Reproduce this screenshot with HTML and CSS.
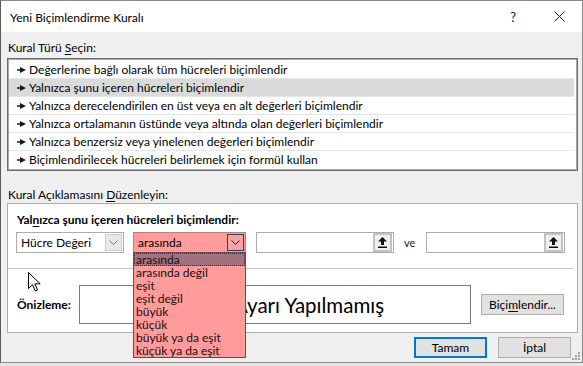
FILE: index.html
```html
<!DOCTYPE html>
<html lang="tr">
<head>
  <meta charset="UTF-8">
  <meta name="viewport" content="width=device-width, initial-scale=1.0">
  <title>Yeni Biçimlendirme Kuralı</title>
  <link rel="stylesheet" href="styles.css">
</head>
<body>
  <div class="dialog">
    <div class="titlebar">
      <span class="title">Yeni Biçimlendirme Kuralı</span>
      <span class="help">?</span>
      <svg class="close" width="11" height="11" viewBox="0 0 11 11"><path d="M0.5 0.5L10.5 10.5M10.5 0.5L0.5 10.5" stroke="#222" stroke-width="1"/></svg>
    </div>

    <div class="content">
      <div class="group-label">Kural Türü <u>S</u>eçin:</div>
      <ul class="rule-list">
        <li><svg class="bullet" width="9" height="6" viewBox="0 0 9 6"><path d="M0 2.2h4v1.6H0z M3 0L9 3L3 6z" fill="#1a1a1a"/></svg>Değerlerine bağlı olarak tüm hücreleri biçimlendir</li>
        <li class="selected"><svg class="bullet" width="9" height="6" viewBox="0 0 9 6"><path d="M0 2.2h4v1.6H0z M3 0L9 3L3 6z" fill="#1a1a1a"/></svg>Yalnızca şunu içeren hücreleri biçimlendir</li>
        <li><svg class="bullet" width="9" height="6" viewBox="0 0 9 6"><path d="M0 2.2h4v1.6H0z M3 0L9 3L3 6z" fill="#1a1a1a"/></svg>Yalnızca derecelendirilen en üst veya en alt değerleri biçimlendir</li>
        <li><svg class="bullet" width="9" height="6" viewBox="0 0 9 6"><path d="M0 2.2h4v1.6H0z M3 0L9 3L3 6z" fill="#1a1a1a"/></svg>Yalnızca ortalamanın üstünde veya altında olan değerleri biçimlendir</li>
        <li><svg class="bullet" width="9" height="6" viewBox="0 0 9 6"><path d="M0 2.2h4v1.6H0z M3 0L9 3L3 6z" fill="#1a1a1a"/></svg>Yalnızca benzersiz veya yinelenen değerleri biçimlendir</li>
        <li><svg class="bullet" width="9" height="6" viewBox="0 0 9 6"><path d="M0 2.2h4v1.6H0z M3 0L9 3L3 6z" fill="#1a1a1a"/></svg>Biçimlendirilecek hücreleri belirlemek için formül kullan</li>
      </ul>

      <div class="group-label label-edit">Kural Açıklamasını <u>D</u>üzenleyin:</div>
      <div class="desc-panel">
        <div class="desc-top">
          <div class="desc-heading">Yal<u>n</u>ızca şunu içeren hücreleri biçimlendir:</div>
          <div class="criteria">
            <div class="combo combo-type">
              <span class="combo-text">Hücre Değeri</span>
              <span class="combo-btn"><svg width="9" height="5" viewBox="0 0 9 5"><path d="M0.5 0.5L4.5 4.5L8.5 0.5" fill="none" stroke="#777" stroke-width="1"/></svg></span>
            </div>
            <div class="combo combo-op">
              <span class="combo-text">arasında</span>
              <span class="combo-btn"><svg width="9" height="5" viewBox="0 0 9 5"><path d="M0.5 0.5L4.5 4.5L8.5 0.5" fill="none" stroke="#222" stroke-width="1"/></svg></span>
            </div>
            <div class="refbox">
              <span class="ref-btn"><svg width="9" height="11" viewBox="0 0 9 11"><path d="M4.5 0L9 4.5H6V8H3V4.5H0z" fill="#111"/><rect x="0" y="9.5" width="9" height="1.5" fill="#111"/></svg></span>
            </div>
            <span class="and">ve</span>
            <div class="refbox refbox-end">
              <span class="ref-btn"><svg width="9" height="11" viewBox="0 0 9 11"><path d="M4.5 0L9 4.5H6V8H3V4.5H0z" fill="#111"/><rect x="0" y="9.5" width="9" height="1.5" fill="#111"/></svg></span>
            </div>
          </div>
        </div>
        <div class="preview-row">
          <span class="preview-label">Önizleme:</span>
          <div class="preview-box">Biçim Ayarı Yapılmamış</div>
          <button class="btn btn-format">Biçi<u>m</u>lendir...</button>
        </div>
      </div>

      <div class="actions">
        <button class="btn btn-default">Tamam</button>
        <button class="btn">İptal</button>
      </div>
    </div>

    <!-- open dropdown of the operator combo -->
    <ul class="op-list">
      <li class="current">arasında</li>
      <li>arasında değil</li>
      <li>eşit</li>
      <li>eşit değil</li>
      <li>büyük</li>
      <li>küçük</li>
      <li>büyük ya da eşit</li>
      <li>küçük ya da eşit</li>
    </ul>

    <svg class="cursor" width="13" height="20" viewBox="0 0 13 20"><path d="M0.5 0.5V16.5L4.5 12.7L7.3 19L9.6 18L6.9 11.8H12.2z" fill="#fff" stroke="#000" stroke-width="1" stroke-linejoin="round"/></svg>

    <svg class="grip" width="8" height="8" viewBox="0 0 8 8"><g fill="#a0a0a0"><rect x="6" y="0" width="2" height="2"/><rect x="3" y="3" width="2" height="2"/><rect x="6" y="3" width="2" height="2"/><rect x="0" y="6" width="2" height="2"/><rect x="3" y="6" width="2" height="2"/><rect x="6" y="6" width="2" height="2"/></g></svg>
  </div>
</body>
</html>
```
FILE: styles.css
```css
body {
  margin: 0;
  background-color: #e6e6e6;
  font-family: Lato, "Open Sans", sans-serif;
  font-size: 12px;
  color: #000;
}
u {
  text-decoration-thickness: 1px;
  text-underline-offset: 2px;
}
.dialog {
  position: relative;
  width: 581px;
  height: 361px;
  background-color: #f0f0f0;
  border: 1px solid #8a8a8a;
  border-left-color: #5a5a5a;
  overflow: hidden;
}
.titlebar {
  display: flex;
  align-items: center;
  height: 31px;
  padding-left: 9px;
  background: #fff;
}
.title {
  flex: 1;
  line-height: 15px;
  margin-top: 2px;
}
.help {
  font-size: 13px;
  margin-right: 38px;
  color: #222;
}
.close {
  margin-right: 17px;
}
.content {
  padding: 0 4px 0 6px;
}
.group-label {
  margin-top: 8px;
  line-height: 15px;
  padding-left: 1px;
}
.label-edit {
  margin-top: 16px;
}
.rule-list {
  list-style: none;
  margin: 3px 0 0;
  padding: 2px 3px 0 1px;
  height: 109px;
  background: #fff;
  border: 1px solid #6e6e6e;
  box-shadow: inset 0 0 0 1px #a8a8a8;
}
.rule-list li {
  display: flex;
  align-items: center;
  height: 17px;
  border-bottom: 1px solid #e6e6e6;
  padding-left: 8px;
  white-space: nowrap;
}
.rule-list li.selected {
  background: #dadada;
}
.rule-list li:last-child {
  border-bottom: none;
}
.bullet {
  margin-right: 3px;
}
.desc-panel {
  margin-top: 1px;
  height: 128px;
  background: #fff;
  border: 1px solid #acacac;
}
.desc-top {
  margin-right: 3px;
  padding: 8px 0 15px 8px;
  border-bottom: 1px solid #c8c8c8;
}
.desc-heading {
  font-weight: bold;
  line-height: 15px;
  padding-left: 1px;
}
.criteria {
  display: flex;
  align-items: center;
  margin-top: 5px;
  height: 21px;
}
.combo {
  display: flex;
  align-items: center;
  box-sizing: border-box;
  height: 21px;
  padding: 1px 1px 1px 4px;
  border: 1px solid #acacac;
  background: #fff;
}
.combo-text {
  flex: 1;
}
.combo-btn {
  display: flex;
  align-items: center;
  justify-content: center;
  box-sizing: border-box;
  width: 17px;
  height: 17px;
  border: 1px solid #cfcfcf;
  background: #e8e8e8;
}
.combo-type {
  width: 108px;
}
.combo-op {
  width: 113px;
  margin-left: 9px;
  background: #ff9b9b;
  border-color: #b98080;
}
.combo-op .combo-btn {
  border-color: #3c3c5c;
  background: #f7a3a6;
}
.refbox {
  display: flex;
  justify-content: flex-end;
  align-items: center;
  box-sizing: border-box;
  width: 138px;
  height: 21px;
  margin-left: 10px;
  padding-right: 1px;
  border: 1px solid #acacac;
  background: #fff;
}
.ref-btn {
  display: flex;
  align-items: center;
  justify-content: center;
  box-sizing: border-box;
  width: 19px;
  height: 19px;
  border: 2px solid #c2c2c2;
  background: #f0f0f0;
}
.and {
  margin-left: 10px;
  font-size: 11px;
  color: #222;
}
.refbox-end {
  width: 139px;
  margin-left: 11px;
}
.preview-row {
  display: flex;
  align-items: center;
  padding: 16px 0 0 8px;
}
.preview-label {
  width: 63px;
  font-weight: bold;
  padding-left: 1px;
  box-sizing: border-box;
}
.preview-box {
  display: flex;
  align-items: center;
  justify-content: center;
  box-sizing: border-box;
  width: 392px;
  height: 39px;
  padding-left: 14px;
  border: 1px solid #7a7a7a;
  font-size: 20.5px;
  white-space: nowrap;
}
.btn {
  box-sizing: border-box;
  height: 21px;
  padding: 0;
  border: 1px solid #adadad;
  background: #e1e1e1;
  font-family: inherit;
  font-size: 12px;
  color: #000;
}
.btn-format {
  width: 83px;
  margin-left: 10px;
}
.actions {
  display: flex;
  justify-content: flex-end;
  gap: 11px;
  margin-top: 4px;
  padding-right: 7px;
}
.actions .btn {
  width: 73px;
}
.btn-default {
  border: 2px solid #0078d7;
}
.op-list {
  position: absolute;
  left: 132px;
  top: 251px;
  width: 111px;
  margin: 0;
  padding: 0;
  list-style: none;
  background: #ff9b9b;
  border: 1px solid #6e4a4a;
  font-size: 12px;
}
.op-list li {
  height: 13px;
  line-height: 13px;
  padding-left: 2px;
  color: #1a1010;
}
.op-list li.current {
  background: #a0717f;
  outline: 1px dotted #3a2a2a;
  outline-offset: -1px;
}
.cursor {
  position: absolute;
  left: 27px;
  top: 271px;
}
.grip {
  position: absolute;
  right: 2px;
  bottom: 2px;
}
```
